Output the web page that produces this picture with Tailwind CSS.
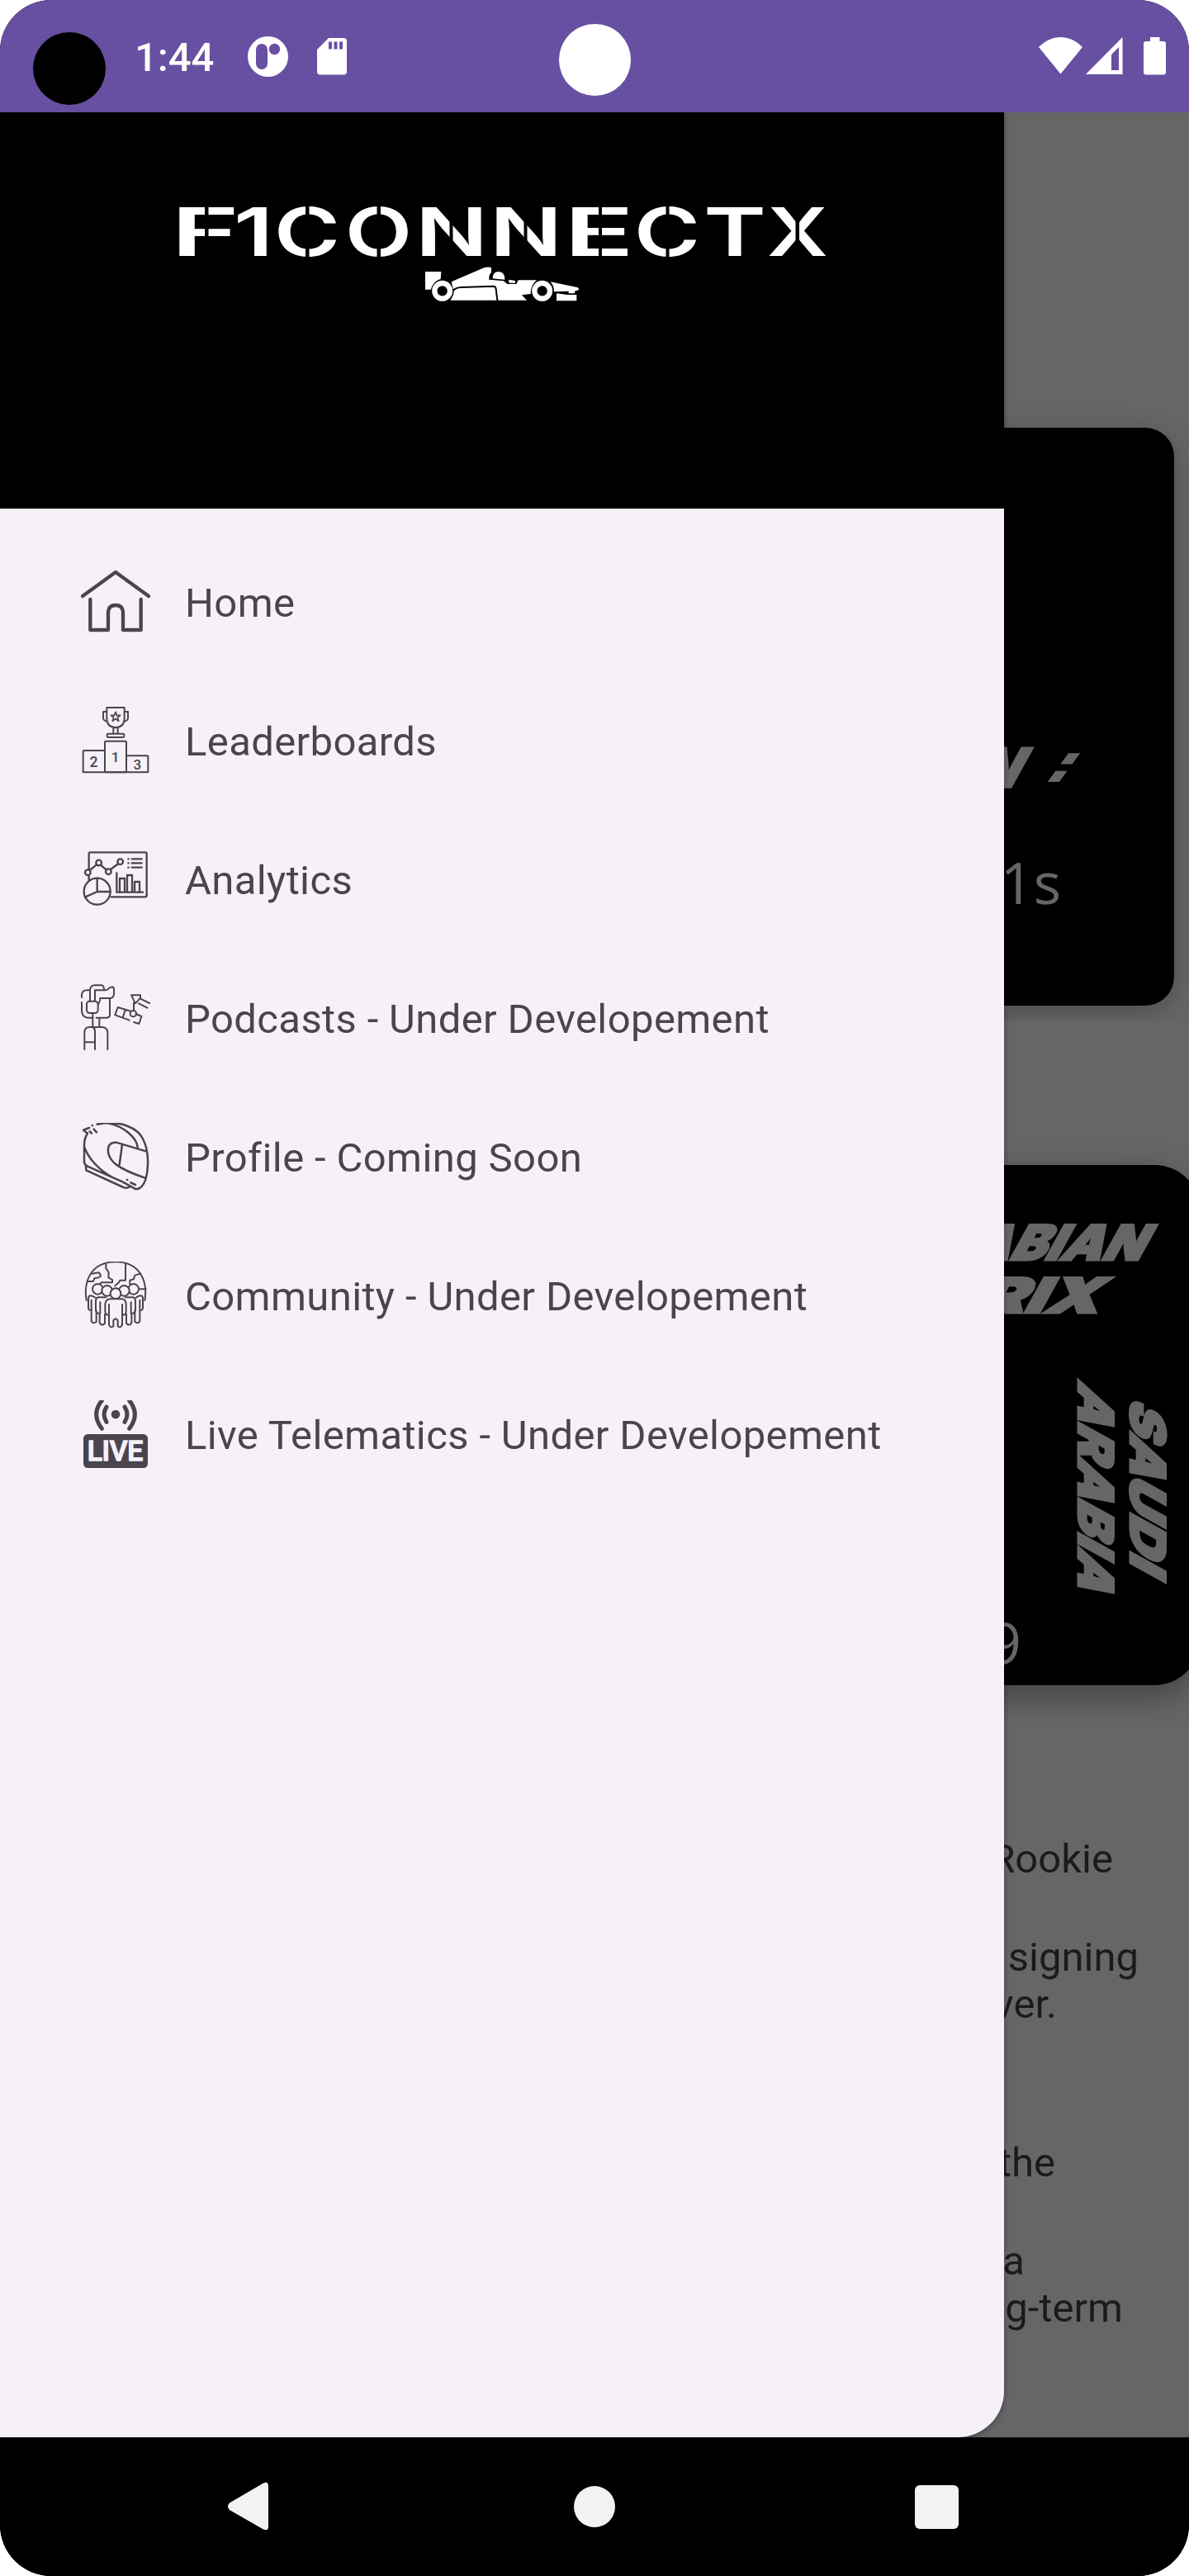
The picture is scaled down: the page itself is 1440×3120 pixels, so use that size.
<!DOCTYPE html>
<html lang="en">
<head>
<meta charset="utf-8">
<title>F1ConnectX</title>
<script src="https://cdn.jsdelivr.net/npm/@tailwindcss/browser@4"></script>
</head>
<body class="bg-white">
<div class="relative flex h-[3120px] w-[1440px] flex-col overflow-hidden rounded-[62px] bg-black font-[Roboto,sans-serif]">

  <!-- Status bar -->
  <header class="relative flex h-[136px] shrink-0 items-start bg-[#6750a2] text-white">
    <div class="mt-[39px] ml-[40px] size-[88px] rounded-full bg-black"></div>
    <div class="mt-[41px] ml-[35px] w-[99px] text-[49px] leading-[57px] font-medium">1:44</div>
    <svg class="mt-[44px] ml-[38px] h-[49px] w-[49px]" viewBox="0 0 49 49"><circle cx="24.500" cy="24.500" r="24.500" fill="#fff"/><rect x="10" y="9" width="14" height="31" rx="7" fill="#6750a2"/><circle cx="32.500" cy="15.500" r="6.700" fill="#6750a2"/></svg>
    <svg class="mt-[46px] ml-[35px] h-[45px] w-[36px]" viewBox="0 0 36 45"><path d="M14 0H32Q36 0 36 4V40.500Q36 44.500 32 44.500H4Q0 44.500 0 40.500V14Z" fill="#fff"/><path d="M14 4.500h4v9h-4zM20.500 4.500h4v9h-4zM27 4.500h4v9h-4z" fill="#6750a2"/></svg>
    <div class="absolute top-[29px] left-[677px] size-[87px] rounded-full bg-white"></div>
    <div class="mt-[45px] mr-[28px] ml-auto flex">
      <svg class="h-[46px] w-[53px]" viewBox="0 0 53 46"><path d="M0 12Q12 0 26.500 0T53 12L26.500 44.500Z" fill="#fff"/></svg>
      <svg class="ml-[4px] h-[46px] w-[45px]" viewBox="0 0 45 46"><path fill-rule="evenodd" d="M44.500 0V45H0ZM40 12L31 21V40H40Z" fill="#fff"/></svg>
      <svg class="ml-[25px] h-[46px] w-[27px]" viewBox="0 0 27 46"><path d="M8 0H19.500V5H24Q27 5 27 8V42.500Q27 45.500 24 45.500H3Q0 45.500 0 42.500V8Q0 5 3 5H8Z" fill="#fff"/></svg>
    </div>
  </header>

  <main class="relative h-[2816px] shrink-0 overflow-hidden bg-[#666666]">
    <!-- Dimmed page content -->
    <section class="h-[1100px] overflow-hidden pt-[382px] pr-[18px] pl-[18px]">
      <div class="h-[700px] rounded-[35px] bg-black pt-[380px] shadow-[0_8px_32px_rgba(0,0,0,0.25)]">
        <svg class="ml-auto h-[64px] w-[300px] overflow-visible" viewBox="1122 898 300 64" fill="#666" stroke="#666" font-family="Inter, sans-serif" font-weight="900">
          <text transform="translate(1173 954) skewX(-29)" font-size="67" stroke-width="1.500" textLength="55" lengthAdjust="spacingAndGlyphs">N</text>
          <text transform="translate(1263 946) skewX(-36)" font-size="60" stroke-width="2" font-family="DejaVu Sans, sans-serif" font-weight="700" textLength="27" lengthAdjust="spacingAndGlyphs">:</text>
        </svg>
        <div class="mt-[56px] pr-[137px] text-right font-['Open_Sans',sans-serif] text-[70px] leading-[100px] text-[#666666]">1s</div>
      </div>
    </section>
    <section class="h-[856px] overflow-hidden pt-[175px] pl-[18px]">
      <div class="h-[630px] w-[1436px] rounded-[56px] bg-black shadow-[0_14px_40px_rgba(0,0,0,0.35)]">
        <svg class="ml-auto h-[630px] w-[456px] overflow-visible" viewBox="998 1411 456 630" fill="#666" stroke="#666" stroke-width="3" stroke-linejoin="miter" font-family="Inter, sans-serif" font-weight="900" font-size="58.500">
          <text transform="translate(1077 1526) skewX(-29)" textLength="304" lengthAdjust="spacingAndGlyphs">ARABIAN</text>
          <text transform="translate(1127 1589.500) skewX(-29)" textLength="201" lengthAdjust="spacingAndGlyphs">PRIX</text>
          <text transform="translate(1305.500 1670) rotate(90) skewX(-29)" textLength="252" lengthAdjust="spacingAndGlyphs">ARABIA</text>
          <text transform="translate(1368.500 1691) rotate(90) skewX(-29)" textLength="205" lengthAdjust="spacingAndGlyphs">SAUDI</text>
          <text x="1237" y="2016" text-anchor="end" font-family="Open Sans, sans-serif" font-weight="400" font-size="70" stroke="none">9</text>
        </svg>
      </div>
    </section>
    <section class="pt-[131px] text-right text-[49px] leading-[57px] text-[#1b1b1e]">
      <p class="pr-[92px]">Rookie</p>
      <div class="pt-[62px]">
        <p class="pr-[61px]">signing</p>
        <p class="pr-[160px]">driver.</p>
      </div>
      <p class="pt-[135px] pr-[162px]">the</p>
      <div class="pt-[62px]">
        <p class="pr-[199px]">a</p>
        <p class="pr-[80px]">long-term</p>
      </div>
    </section>

    <!-- Navigation drawer -->
    <aside class="absolute top-0 left-0 flex h-[2816px] w-[1216px] flex-col overflow-hidden rounded-br-[56px] bg-[#f6f1f9] shadow-[0_2px_7px_rgba(0,0,0,0.35)]">
      <div class="h-[480px] shrink-0 bg-black pt-[94px] pl-[200px]">
        <svg class="h-[150px] w-[820px]" viewBox="0 0 820 150">
          <g fill="#fff" font-family="Inter, sans-serif" font-weight="600" font-size="81">
            <text x="7" y="80.300" textLength="83" lengthAdjust="spacingAndGlyphs">F</text>
            <text x="83" y="80.300" textLength="48" lengthAdjust="spacingAndGlyphs">1</text>
            <text x="132" y="80.300" textLength="80" lengthAdjust="spacingAndGlyphs">C</text>
            <text x="218" y="80.300" textLength="81" lengthAdjust="spacingAndGlyphs">O</text>
            <text x="303" y="80.300" textLength="88" lengthAdjust="spacingAndGlyphs">N</text>
            <text x="393" y="80.300" textLength="88" lengthAdjust="spacingAndGlyphs">N</text>
            <text x="483" y="80.300" textLength="85" lengthAdjust="spacingAndGlyphs">E</text>
            <text x="568" y="80.300" textLength="80" lengthAdjust="spacingAndGlyphs">C</text>
            <text x="652" y="80.300" textLength="76" lengthAdjust="spacingAndGlyphs">T</text>
            <text x="729" y="80.300" textLength="74" lengthAdjust="spacingAndGlyphs">X</text>
          </g>
          <!-- stencil cuts -->
          <path d="M48 18h4.500v42H48zM170 18h4.500v66h-4.500zM256.500 18h4.500v66h-4.500zM344.500 18h4v66h-4zM434.500 18h4v66h-4zM525 18h4v66h-4zM606.500 18h4v66h-4zM763.500 18h4.500v66h-4.500z" fill="#000"/>
          <!-- race car -->
          <g transform="scale(.33333)">
            <path fill="#fff" d="M945 297H1003L1001 324Q975 330 965 362H945ZM1040 334L1155 284Q1170 279 1185 282V300Q1176 307 1177 326L1230 331L1243 342H1276L1283 328H1350Q1328 345 1328 378L1296 382L1314 401H1036Q1048 385 1049 370Z"/>
            <path fill="#fff" d="M1190 322Q1190 297 1212 297Q1235 299 1234 326ZM1248 326L1272 330V338H1250ZM1400 334L1500 355L1504 363L1488 368V376H1466V368L1413 370Q1413 348 1400 334ZM1422 376L1460 381H1495V403H1422Z"/>
            <path fill="none" stroke="#000" stroke-width="6" d="M1046 366Q1056 355 1075 354L1192 350Q1201 350 1202 360L1207 402"/>
            <g fill="#000" stroke="#fff" stroke-width="19"><circle cx="1007" cy="367" r="28"/><circle cx="1370" cy="367" r="28"/></g>
          </g>
        </svg>
      </div>
      <nav class="flex flex-col pt-[30px] text-[49px] leading-[57px] tracking-[0.38px] text-[#49454e]">
        <a class="flex h-[168px] items-center gap-[42px] pl-[98px]">
          <svg class="size-[84px] shrink-0" viewBox="54 54 252 252" fill="none" stroke="#49454e" stroke-width="13" stroke-linecap="round" stroke-linejoin="round"><path d="M60 156L180 69L300 156M88 168V279H153V213Q155 189 180 189T207 213V279H272V168"/></svg>
          <span>Home</span>
        </a>
        <a class="flex h-[168px] items-center gap-[42px] pl-[98px]">
          <svg class="size-[84px] shrink-0" viewBox="54 558 252 252" fill="none" stroke="#49454e" stroke-width="6" stroke-linejoin="round"><path d="M148 561H212V600Q212 632 180 634Q148 632 148 600ZM148 576H135V600Q136 609 151 612M212 576H225V600Q224 609 209 612M172 634V656M188 634V656"/><rect x="149" y="656" width="62" height="13" rx="4"/><rect x="141" y="683" width="78" height="113" rx="3"/><path d="M141 717H66Q62 717 62 721V796H298V740Q298 736 294 736H219"/><path stroke-width="5" d="M180 577L184.500 589H197L187 597L191 610L180 602L169 610L173 597L163 589H175.500Z"/><g fill="#49454e" stroke="none" font-family="Roboto, sans-serif" font-weight="500" text-anchor="middle"><text x="101" y="776" font-size="53">2</text><text x="179" y="759" font-size="52">1</text><text x="259" y="785" font-size="51">3</text></g></svg>
          <span>Leaderboards</span>
        </a>
        <a class="flex h-[168px] items-center gap-[42px] pl-[98px]">
          <svg class="size-[84px] shrink-0" viewBox="54 1062 252 252" fill="none" stroke="#49454e" stroke-width="7" stroke-linecap="round" stroke-linejoin="round"><path d="M83 1148V1092Q83 1087 88 1087H288Q293 1087 293 1092V1243Q293 1249 287 1249H164M83 1172V1188"/><path d="M86 1152L111 1132M127 1134L146 1150M162 1149L190 1128"/><circle cx="79" cy="1160" r="10"/><circle cx="119" cy="1125" r="10"/><circle cx="154" cy="1157" r="10"/><circle cx="197" cy="1121" r="10"/><circle cx="113" cy="1229" r="48"/><path d="M113 1181V1230L69 1250M113 1230H161"/><path d="M184 1162V1232H279"/><path d="M195 1230V1182H213V1230M222 1230V1170H240V1230M249 1230V1194H267V1230"/><path d="M239 1111H275M239 1126H275M239 1142H275M226 1111H227M226 1126H227M226 1142H227"/></svg>
          <span>Analytics</span>
        </a>
        <a class="flex h-[168px] items-center gap-[42px] pl-[98px]">
          <svg class="size-[84px] shrink-0" viewBox="54 66 252 252" fill="none" stroke="#49454e" stroke-width="6" stroke-linecap="round" stroke-linejoin="round"><path d="M57 114V104Q59 88 76 88H86M57 132V164Q59 186 78 188H94M87 127V86Q90 70 104 70H128Q137 71 138 84M105 127V88H144Q152 87 156 80L168 76Q174 77 174 86V103Q172 116 160 117H124Q122 134 117 138M159 118V178Q158 188 146 188H110"/><rect x="75" y="128" width="41" height="43" rx="11"/><path d="M97 172V222M121 190V222M67 303V239Q69 222 84 222H132Q151 224 151 243V303M97 222Q105 226 105 238V303M67 277H104"/><path d="M237 106H270V116L252 136ZM246 134V162M270 119L303 135M264 136L295 152M188 150L235 164M254 174L274 183L265 210L246 204M188 150L178 178L230 197M215 160L206 187"/><circle cx="244" cy="173" r="11"/></svg>
          <span>Podcasts - Under Developement</span>
        </a>
        <a class="flex h-[168px] items-center gap-[42px] pl-[98px]">
          <svg class="size-[84px] shrink-0" viewBox="54 570 252 252" fill="none" stroke="#49454e" stroke-width="7.500" stroke-linecap="round" stroke-linejoin="round"><path d="M113 575C200 558 262 590 280 630C300 670 302 730 289 776Q276 812 254 811L205 784M150 571C210 581 258 625 260 660M78 608L63 596L84 588M78 608C66 628 66 640 66 656V712Q67 722 78 728L205 784M72 727L73 742L208 804Q220 810 232 802M66 656C80 700 120 740 165 766"/><path d="M293 674L182 641Q150 640 153 676C158 710 185 735 287 770M204 648L194 722"/><path d="M86 601L93 608M101 593L111 604M95 580H96M222 777H223M235 787L252 795"/></svg>
          <span>Profile - Coming Soon</span>
        </a>
        <a class="flex h-[168px] items-center gap-[42px] pl-[98px]">
          <svg class="size-[84px] shrink-0" viewBox="54 84 252 252" fill="none" stroke="#49454e" stroke-width="6" stroke-linecap="round" stroke-linejoin="round"><path d="M74 225C62 150 95 85 180 85S298 150 286 225"/><path d="M145 92V108L155 124L154 142L168 150V160H128L122 166M216 92V152H196L192 160L178 172M94 128L119 124Q126 128 125 138Q116 144 104 144L98 156H78M270 128L250 134L246 148L232 152V166M264 184H290"/><path d="M105 214Q82 200 81 218V254Q84 264 92 258V300Q98 312 110 303V262M255 214Q278 200 279 218V254Q276 264 268 258V300Q262 312 250 303V262M92 224V258M268 224V258M145 214H116Q108 216 108 228V262Q110 274 122 272V306Q128 320 141 309V275M215 214H244Q252 216 252 228V262Q250 274 238 272V306Q232 320 219 309V275M124 232V272M236 232V272"/><circle cx="115" cy="184" r="19"/><circle cx="245" cy="184" r="19"/><g fill="#f6f1f9"><circle cx="149" cy="190" r="19"/><circle cx="211" cy="190" r="19"/><circle cx="180" cy="200" r="19"/></g><path fill="#f6f1f9" d="M156 240V314Q162 328 172 319V298Q180 286 188 298V319Q198 328 204 314V276Q218 282 218 264V238Q216 220 202 220H158Q144 222 142 238V264Q144 282 156 276M204 240V276"/></svg>
          <span>Community - Under Developement</span>
        </a>
        <a class="flex h-[168px] items-center gap-[42px] pl-[98px]">
          <svg class="size-[84px] shrink-0" viewBox="54 588 252 252" fill="none" stroke="#49454e" stroke-width="15" stroke-linecap="round"><circle cx="180" cy="639" r="16" fill="#49454e" stroke="none"/><path d="M147 612Q129 639 147 667M213 612Q231 639 213 667M130 589Q90 638 130 691M230 589Q270 638 230 691"/><rect x="63" y="711" width="234" height="123" rx="16" fill="#49454e" stroke="none"/><text x="77" y="808" font-family="Roboto, sans-serif" font-weight="500" font-size="101" textLength="203" lengthAdjust="spacing" fill="#f6f1f9" stroke="#f6f1f9" stroke-width="4" stroke-linejoin="round">LIVE</text></svg>
          <span>Live Telematics - Under Developement</span>
        </a>
      </nav>
    </aside>
  </main>

  <!-- System navigation -->
  <footer class="flex h-[168px] shrink-0 items-center bg-black">
    <svg class="ml-[275px] h-[60px] w-[51px]" viewBox="0 0 51 60"><path d="M3 25.500L44 1.500Q50 -1 50 5V54Q50 60 44 57.500L3 34Q-1 30 3 25.500Z" fill="#f2f2f2"/></svg>
    <div class="ml-[369px] size-[50px] rounded-full bg-[#f2f2f2]"></div>
    <div class="ml-[363px] size-[53px] rounded-[6px] bg-[#f2f2f2]"></div>
  </footer>
</div>
</body>
</html>
